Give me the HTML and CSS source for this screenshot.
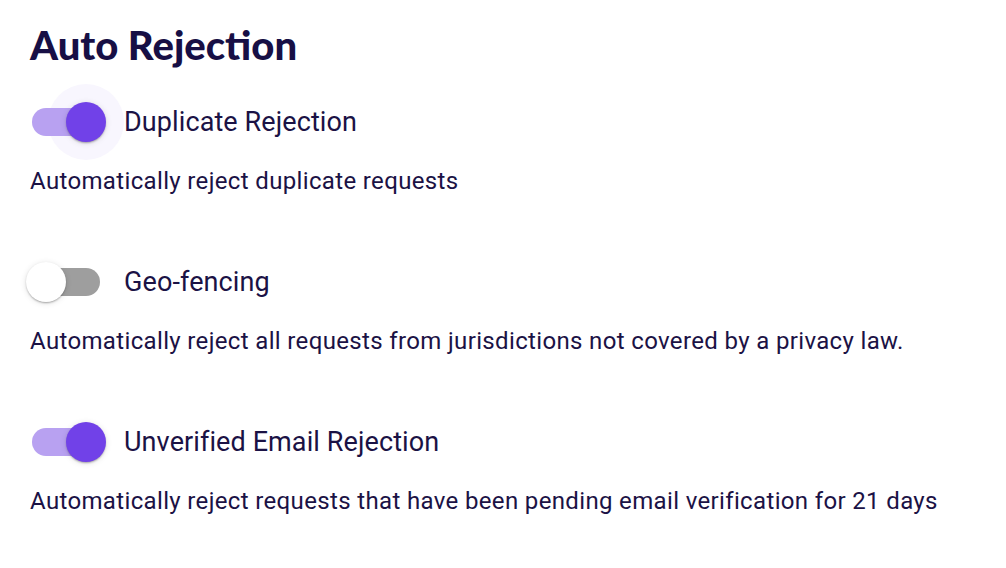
FILE: index.html
```html
<!DOCTYPE html>
<html lang="en">
<head>
	<meta charset="UTF-8" />
	<meta name="viewport" content="width=device-width, initial-scale=1.0" />
	<title>Auto Rejection</title>
	<link rel="stylesheet" href="styles.css">
</head>
<body>
	<div class="settings">
		<h1 class="settings-title">Auto Rejection</h1>

		<div class="option">
			<label class="option-row">
				<span class="switch on focus">
					<span class="switch-halo"></span>
					<span class="switch-track"></span>
					<span class="switch-thumb"></span>
				</span>
				<span class="option-label">Duplicate Rejection</span>
			</label>
			<p class="option-desc">Automatically reject duplicate requests</p>
		</div>

		<div class="option">
			<label class="option-row">
				<span class="switch">
					<span class="switch-track"></span>
					<span class="switch-thumb"></span>
				</span>
				<span class="option-label">Geo-fencing</span>
			</label>
			<p class="option-desc">Automatically reject all requests from jurisdictions not covered by a privacy law.</p>
		</div>

		<div class="option">
			<label class="option-row">
				<span class="switch on">
					<span class="switch-track"></span>
					<span class="switch-thumb"></span>
				</span>
				<span class="option-label">Unverified Email Rejection</span>
			</label>
			<p class="option-desc">Automatically reject requests that have been pending email verification for 21 days</p>
		</div>
	</div>
</body>
</html>
```

FILE: styles.css
```css
*{padding: 0;margin: 0;box-sizing: border-box;}
body{background: #fff;color: #1b1245;font-family: Roboto, "Liberation Sans", sans-serif;}

.settings{padding: 20px 0 0 30px;}
.settings-title{font-family: Lato, "Noto Sans", sans-serif;font-weight: 900;font-size: 40px;line-height: 50px;color: #170f45;}

.option{margin-top: 14px;}
.option + .option{margin-top: 48px;}
.option-row{display: flex;align-items: center;margin-left: -22px;cursor: pointer;}
.option-label{font-size: 27px;letter-spacing: 0.1px;color: #1b1245;}
.option-desc{font-size: 24px;line-height: 30px;letter-spacing: 0.35px;margin-top: 6px;color: #1b1245;}

/* switch, drawn 2x of a material switch */
.switch{position: relative;width: 116px;height: 76px;flex: none;}
.switch-track{position: absolute;left: 24px;top: 24px;width: 68px;height: 28px;border-radius: 14px;background: #9e9e9e;}
.switch-thumb{position: absolute;left: 18px;top: 18px;width: 40px;height: 40px;border-radius: 50%;background: #fff;
	box-shadow: 0 2px 2px -1px rgba(0,0,0,.2), 0 1px 2px 0 rgba(0,0,0,.14), 0 1px 6px 0 rgba(0,0,0,.12);}
.switch-halo{position: absolute;left: 40px;top: 0;width: 76px;height: 76px;border-radius: 50%;background: #f8f6fe;}
.switch.on .switch-track{background: #b8a1f1;}
.switch.on .switch-thumb{left: 58px;background: #7141e8;}
```
